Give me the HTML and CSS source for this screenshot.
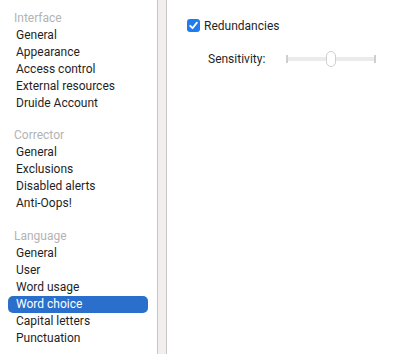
FILE: index.html
```html
<!DOCTYPE html>
<html lang="en">
<head>
    <meta charset="UTF-8">
    <meta name="viewport" content="width=device-width, initial-scale=1.0">
    <title>Preferences</title>
    <link rel="stylesheet" href="styles.css">
</head>
<body>

<div class="window">
    <div class="sidebar">
        <div class="group">
            <div class="group-title">Interface</div>
            <div class="item">General</div>
            <div class="item">Appearance</div>
            <div class="item">Access control</div>
            <div class="item">External resources</div>
            <div class="item">Druide Account</div>
        </div>
        <div class="group">
            <div class="group-title">Corrector</div>
            <div class="item">General</div>
            <div class="item">Exclusions</div>
            <div class="item">Disabled alerts</div>
            <div class="item">Anti-Oops!</div>
        </div>
        <div class="group">
            <div class="group-title">Language</div>
            <div class="item">General</div>
            <div class="item">User</div>
            <div class="item">Word usage</div>
            <div class="item selected">Word choice</div>
            <div class="item">Capital letters</div>
            <div class="item">Punctuation</div>
        </div>
    </div>

    <div class="splitter"></div>

    <div class="content">
        <label class="check-row">
            <span class="checkbox">
                <svg width="11" height="11" viewBox="0 0 11 11">
                    <path d="M2.2 5.8 L4.5 8.2 L8.9 2.6" fill="none" stroke="white" stroke-width="1.8" stroke-linecap="round" stroke-linejoin="round"/>
                </svg>
            </span>
            Redundancies
        </label>

        <div class="slider-row">
            <span class="slider-label">Sensitivity:</span>
            <div class="slider">
                <span class="tick"></span>
                <span class="track"></span>
                <span class="tick"></span>
                <span class="thumb"></span>
            </div>
        </div>
    </div>
</div>

</body>
</html>
```

FILE: styles.css
```css
body {
    margin: 0;
    font-family: Roboto, "Liberation Sans", sans-serif;
    font-size: 12px;
    color: #1f1f1f;
    background-color: white;
}
.window {
    display: flex;
    height: 354px;
    overflow: hidden;
}
.sidebar {
    width: 157px;
    padding-top: 9px;
    flex-shrink: 0;
}
.group {
    margin-bottom: 14px;
}
.group:nth-child(2) {
    margin-bottom: 15px;
}
.group-title {
    height: 18px;
    line-height: 18px;
    padding-left: 14px;
    color: #b3b3b3;
}
.item {
    height: 17px;
    line-height: 17px;
    margin: 0 9px 0 8px;
    padding-left: 8px;
    border-radius: 5px;
}
.item.selected {
    background-color: #2a6fcb;
    color: white;
}
.splitter {
    width: 8px;
    flex-shrink: 0;
    background-color: #f2eeee;
    border-left: 1px solid #c9c5c5;
    border-right: 1px solid #c9c5c5;
}
.content {
    flex: 1;
    padding: 19px 0 0 20px;
}
.check-row {
    display: flex;
    align-items: center;
    gap: 4px;
    height: 13px;
}
.checkbox {
    width: 13px;
    height: 13px;
    border-radius: 3px;
    background-color: #1f7cf0;
    display: flex;
    align-items: center;
    justify-content: center;
}
.slider-row {
    display: flex;
    align-items: center;
    margin-top: 19px;
    padding-left: 21px;
    height: 16px;
}
.slider-label {
    width: 78px;
}
.slider {
    position: relative;
    display: flex;
    align-items: center;
    width: 90px;
    height: 16px;
}
.track {
    flex: 1;
    height: 4px;
    background-color: #ebebeb;
}
.tick {
    width: 2px;
    height: 8px;
    background-color: #cfcfcf;
}
.thumb {
    position: absolute;
    left: 40px;
    top: 0;
    width: 8px;
    height: 14px;
    border: 1px solid #cfcfcf;
    border-radius: 5px;
    background-color: white;
}
```
